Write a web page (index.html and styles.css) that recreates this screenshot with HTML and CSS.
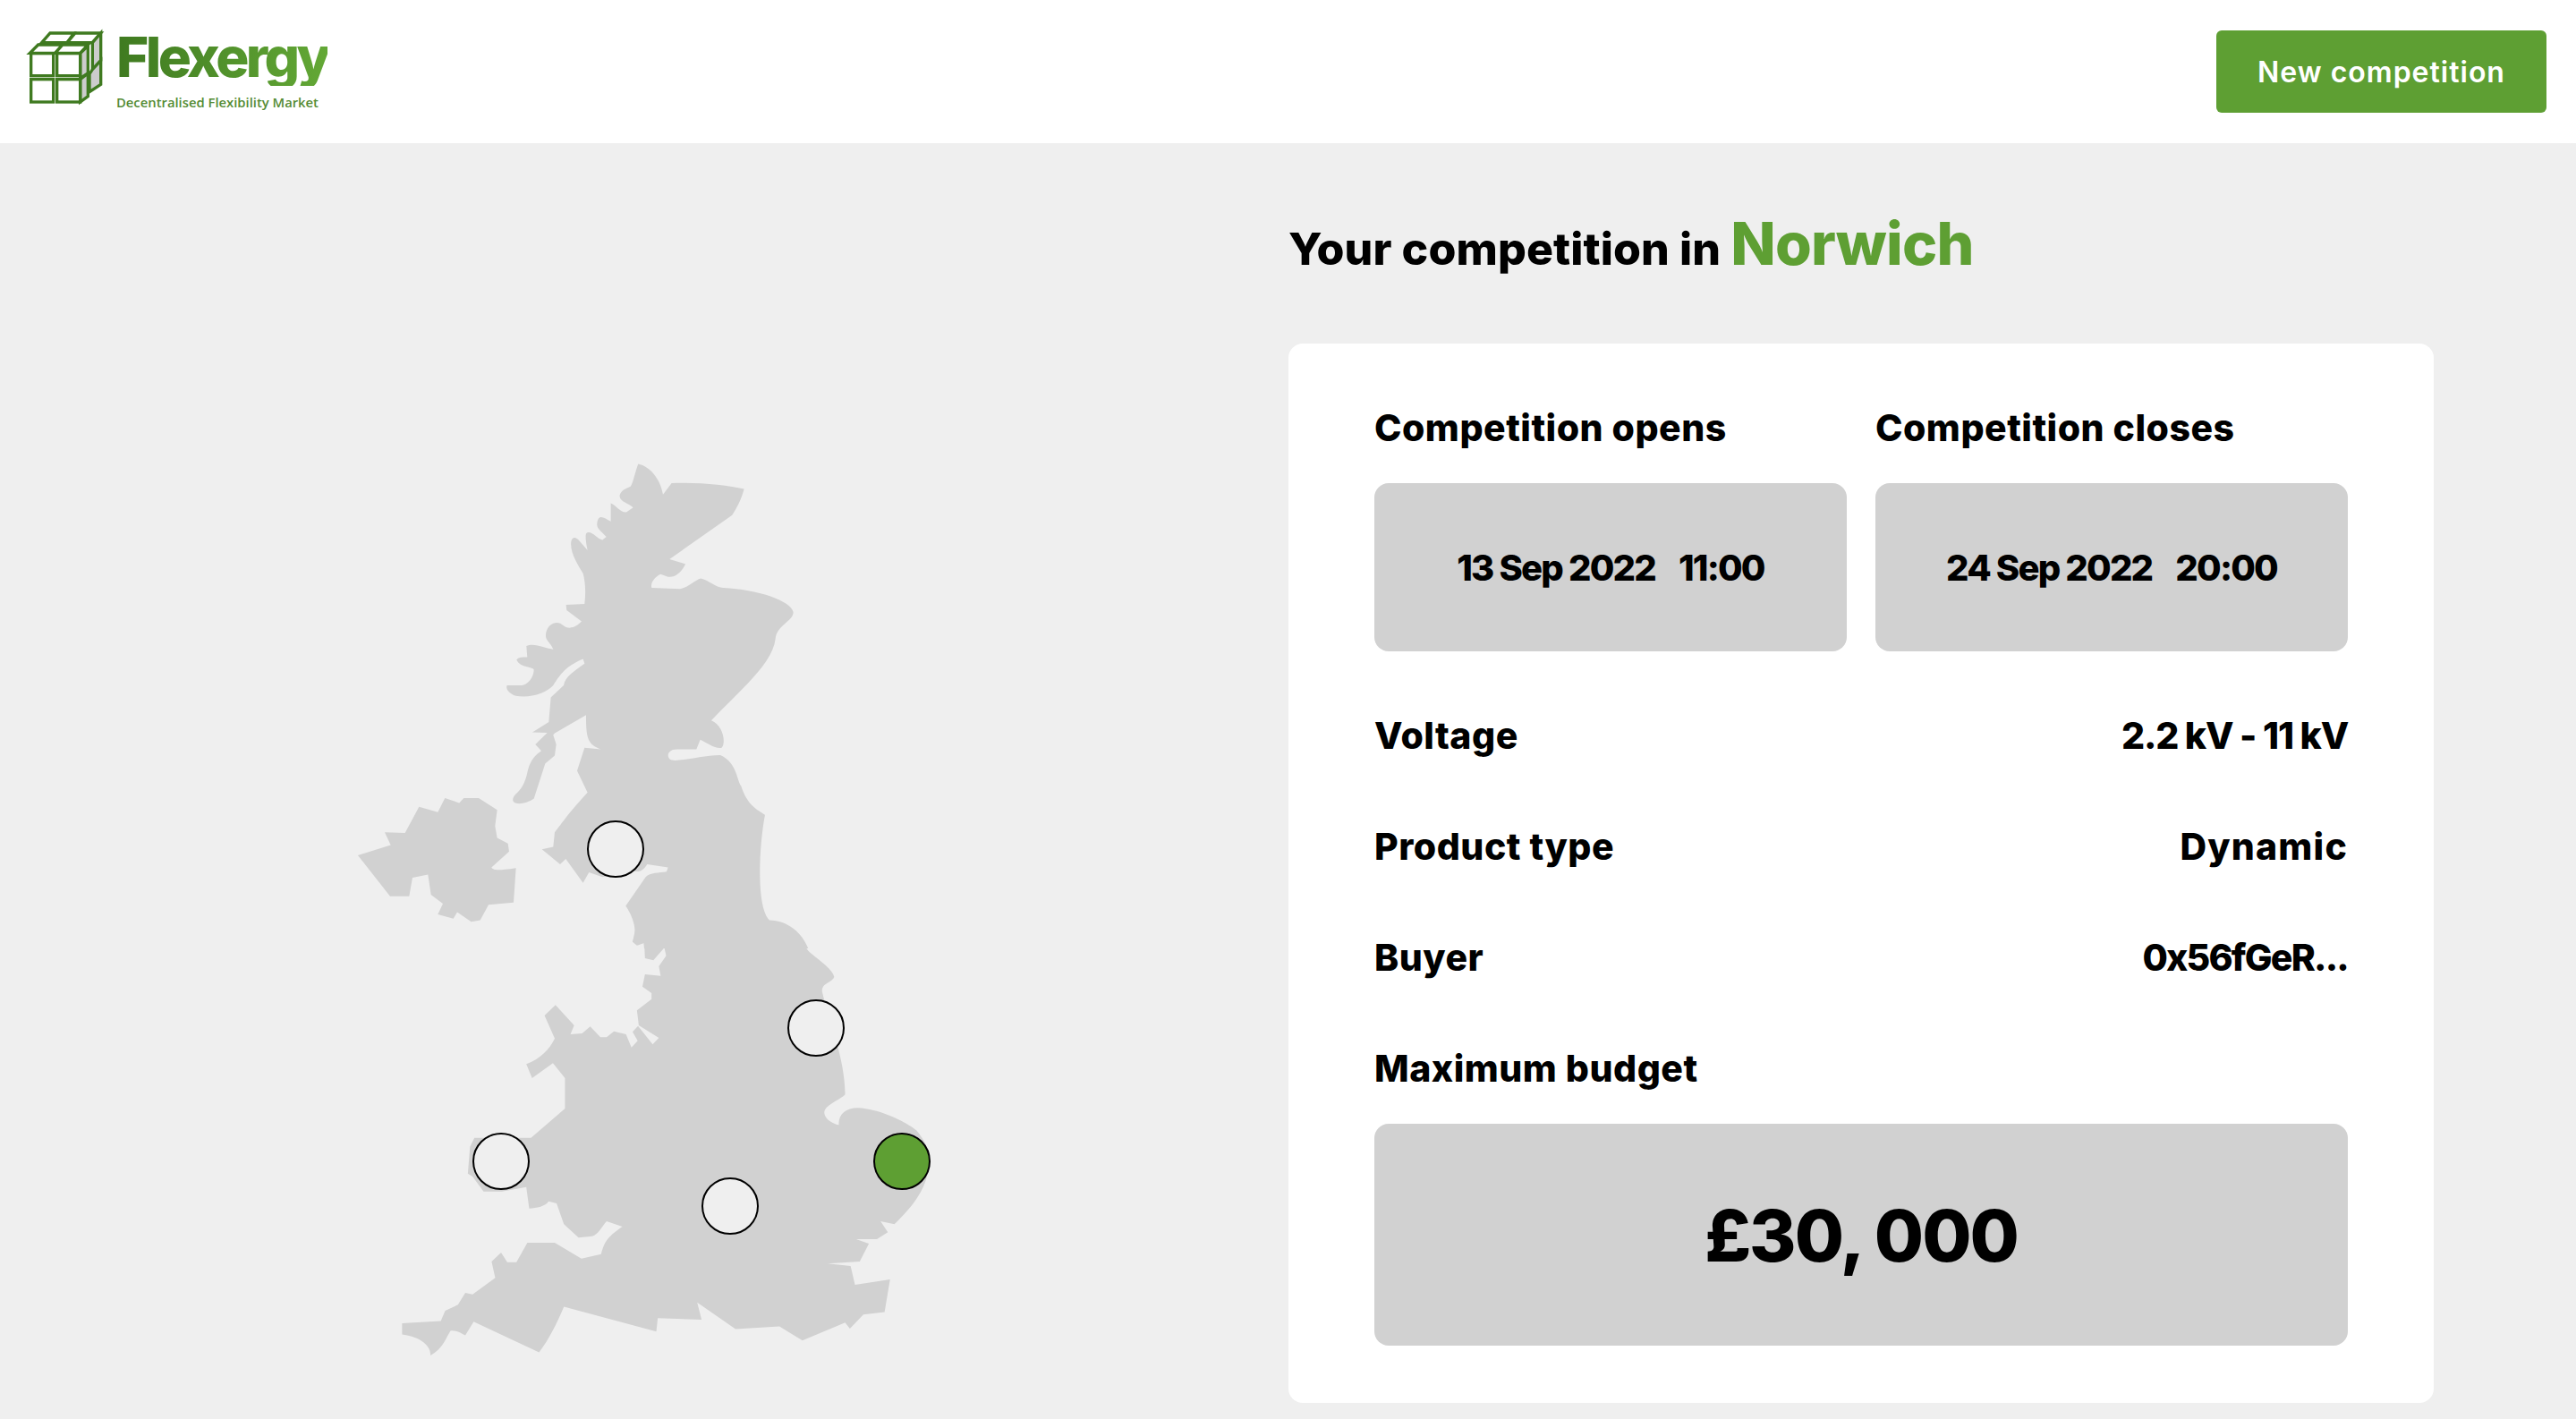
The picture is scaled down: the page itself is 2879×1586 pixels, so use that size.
FILE: index.html
```html
<!DOCTYPE html>
<html>
<head>
    <meta http-equiv="Content-Type" content="text/html; charset=utf-8" />
    <title>Flexergy - Your competition</title>
    <link rel="stylesheet" href="styles.css">
</head>
<body>

<div class="header">
    <a href="#" class="logo">
        <svg class="logo-icon" viewBox="21 6 270 270">
            <g stroke="#3f7a20" stroke-width="10" stroke-linejoin="miter">
                <path fill="#fff" d="M80 65L108 33H188L165 65Z"/>
                <path fill="#fff" d="M165 65L192 33H278L250 65Z"/>
                <path fill="#ccc" d="M250 65L278 33V125L250 155Z"/>
                <path fill="#ccc" d="M250 155L278 125V205L240 230V170Z"/>
                <path fill="#fff" d="M40 100L68 72H150L125 100Z"/>
                <path fill="#fff" d="M125 100L150 72H235L209 100Z"/>
                <path fill="#ccc" d="M209 101L235 76V168L209 184Z"/>
                <path fill="#ccc" d="M209 188L235 168V245L209 264Z"/>
                <rect fill="#fff" x="44" y="101" width="75" height="75"/>
                <rect fill="#fff" x="131" y="101" width="78" height="75"/>
                <rect fill="#fff" x="44" y="188" width="75" height="76"/>
                <rect fill="#fff" x="131" y="188" width="78" height="76"/>
            </g>
        </svg>
        <div class="logo-text">
            <div class="logo-name">Flexergy</div>
            <div class="logo-tagline">Decentralised Flexibility Market</div>
        </div>
    </a>
    <a href="#" class="btn-new">New competition</a>
</div>

<div class="main">
    <div class="map-col">
        <svg class="uk-map" viewBox="380 500 680 1060" width="680" height="1060">
            <g fill="#d1d1d1">
                <!-- scotland + north of england -->
                <path transform="translate(380 500) scale(.3333 .3571)" d="M1000 52C1040 60 1075 100 1083 148L1112 112C1200 108 1300 118 1355 130C1345 165 1330 190 1315 212L1105 350L1158 365C1150 385 1125 410 1100 405L1075 397C1055 405 1040 425 1045 440L1140 443C1165 440 1190 415 1210 410C1235 415 1260 438 1285 440C1400 445 1510 480 1520 515C1520 545 1465 555 1460 600C1450 680 1330 770 1245 855C1285 870 1295 925 1280 940C1260 945 1230 925 1208 915L1195 945H1130C1100 945 1095 965 1105 975C1120 990 1200 965 1275 963C1330 985 1330 1040 1345 1060C1365 1120 1400 1135 1425 1150C1405 1250 1395 1440 1440 1480C1500 1480 1550 1520 1570 1568H1020L1018 1548L1000 1558L982 1545C995 1520 990 1480 958 1435L1025 1345C1040 1330 1070 1332 1095 1328L1100 1315L1030 1305C1015 1330 995 1330 985 1325L880 1345L835 1330L815 1363L757 1288L738 1305L677 1258L715 1250L720 1205C745 1175 770 1140 830 1080L795 1012L820 940L875 945C830 930 825 910 825 838L720 895L715 900L725 930L720 965L688 990L650 1100C630 1112 600 1120 585 1112C570 1100 590 1085 600 1075C620 1055 625 1030 630 1010C640 975 660 960 675 950L655 930L695 893L645 892L700 860L707 783L750 745C755 725 765 712 820 677L815 662C780 675 745 695 715 745C690 770 640 785 590 778C565 770 555 755 560 745H610C630 742 650 720 650 695C640 685 605 690 592 665C600 655 615 658 628 657L625 622C650 610 690 630 715 632C705 610 690 605 690 590C690 555 725 540 745 555C770 575 795 560 810 545L760 510L758 493L820 490C825 450 822 420 815 395C800 370 770 330 775 295C780 275 795 285 800 290L830 322C825 300 822 280 825 270C840 255 860 285 880 290L893 280C880 265 860 255 862 240C865 205 885 220 908 232V175C925 180 940 205 960 203L983 188C970 175 935 170 938 150C945 130 965 128 975 122C985 105 990 75 1000 52Z"/>
                <!-- northern ireland -->
                <path transform="translate(380 500) scale(.3333 .3571)" d="M60 1277L170 1245L150 1205L218 1207L265 1125L328 1142L352 1098L400 1113L415 1098H465L527 1135L520 1185L527 1222L563 1240L567 1265L508 1315C515 1325 530 1325 590 1317L582 1425L498 1432L470 1480L440 1485L393 1455L380 1475L328 1462L345 1428L305 1400L295 1337L243 1347L232 1405H168Z"/>
                <!-- wales + england -->
                <path transform="translate(420 1040) scale(.4082 .3333)" d="M710 0H1150C1170 30 1175 60 1190 75C1220 105 1250 130 1255 155C1250 175 1220 175 1222 205C1240 300 1285 430 1285 550C1270 570 1228 585 1228 612C1230 635 1255 650 1268 652C1265 620 1285 595 1320 595C1390 600 1460 650 1480 670C1500 700 1515 730 1515 770C1515 860 1470 925 1420 985L1382 975L1402 1012L1372 1035H1315L1350 1050L1325 1110L1237 1117L1300 1125L1312 1188L1408 1170L1393 1280L1335 1288L1298 1335L1285 1315L1168 1375L1105 1328L985 1337L880 1247L892 1305L772 1300L768 1345L515 1262C495 1320 475 1370 447 1415L268 1312L245 1358C235 1350 220 1340 205 1342C190 1370 185 1400 150 1425C150 1385 110 1360 72 1355V1317L178 1310L190 1275L225 1255L245 1215L265 1220L327 1165L317 1110L343 1080L360 1112H385L415 1047H490L563 1100L617 1085C625 1050 630 1030 675 993L632 975C620 990 610 1020 592 1025L555 1030L515 985L495 915L473 908C465 925 440 930 420 932L412 860L345 875H295L265 825L252 815L258 725L270 695H425L518 597V495L485 445L428 495L412 448C450 430 475 400 490 362L462 285L492 250L543 318L533 348L565 345L587 322L615 358H632L652 338L685 348L700 392L717 370L703 340L718 320L758 382L775 360L720 318L715 268L755 230V210L730 188L737 147L780 152L775 120L795 85L790 58L760 100L737 93L735 42L715 50L703 38Z"/>
            </g>
            <g class="pins" stroke="#000" stroke-width="2">
                <circle cx="688" cy="949" r="31"/>
                <circle cx="912" cy="1149" r="31"/>
                <circle cx="560" cy="1298" r="31"/>
                <circle cx="816" cy="1348" r="31"/>
                <circle class="pin-active" cx="1008" cy="1298" r="31"/>
            </g>
        </svg>
    </div>

    <div class="info-col">
        <h1 class="title">Your competition in <span class="title-city">Norwich</span></h1>

        <div class="card">
            <div class="date-grid">
                <div>
                    <div class="label">Competition opens</div>
                    <div class="date-box"><span>13 Sep 2022</span><span>11:00</span></div>
                </div>
                <div>
                    <div class="label">Competition closes</div>
                    <div class="date-box"><span>24 Sep 2022</span><span>20:00</span></div>
                </div>
            </div>

            <div class="row"><span class="label">Voltage</span><span class="label value-voltage">2.2 kV - 11 kV</span></div>
            <div class="row"><span class="label">Product type</span><span class="label value-wide">Dynamic</span></div>
            <div class="row"><span class="label">Buyer</span><span class="label value-buyer">0x56fGeR...</span></div>
            <div class="row"><span class="label">Maximum budget</span></div>

            <div class="budget-box">£30, 000</div>
        </div>
    </div>
</div>

</body>
</html>
```

FILE: styles.css
```css
body{
    margin: 0px;padding: 0px;
    background: #efefef;color: #000;
    font-family: Inter, "Liberation Sans", sans-serif;
}
a{text-decoration: none;}

/*顶部*/
.header{
    height: 160px;padding: 0px 33px 0px 27px;
    background: #fff;
    display: flex;align-items: center;justify-content: space-between;
}
.logo{display: flex;align-items: flex-start;gap: 13px;margin-bottom: 8px;}
.logo-icon{width: 90px;height: 90px;display: block;}
.logo-text{padding-top: 4px;}
.logo-name{
    font-size: 62px;line-height: 64px;font-weight: 800;letter-spacing: -3.6px;
    background: linear-gradient(90deg, #3f7a20, #63a836);
    -webkit-background-clip: text;background-clip: text;color: transparent;
}
.logo-tagline{
    margin-top: 8px;
    font-family: "Open Sans", sans-serif;
    font-size: 14.8px;line-height: 20px;font-weight: 600;color: #558c35;
}
.btn-new{
    width: 369px;height: 92px;border-radius: 6px;
    background: #5e9f33;color: #fff;
    font-size: 32px;font-weight: 600;letter-spacing: 1px;
    display: flex;align-items: center;justify-content: center;
}

/*主体*/
.main{
    display: grid;grid-template-columns: 1440px 1280px;
}
.map-col{padding: 340px 0px 0px 380px;}
.uk-map{display: block;}
.pins circle{fill: #efefef;}
.pins .pin-active{fill: #5e9f33;}

.title{
    margin: 0px;height: 224px;
    font-size: 50px;font-weight: 800;line-height: 224px;letter-spacing: .1px;
}
.title-city{font-size: 66px;color: #5e9f33;letter-spacing: -.7px;}

.card{
    padding: 64px 96px;
    background: #fff;border-radius: 16px;
}
.label{font-size: 41px;line-height: 60px;font-weight: 800;letter-spacing: .5px;}
.value-voltage{letter-spacing: -1.2px;}
.value-wide{letter-spacing: 1.2px;}
.value-buyer{letter-spacing: -1.8px;}
.date-grid{
    display: grid;grid-template-columns: 1fr 1fr;gap: 32px;
}
.date-box{
    height: 188px;margin-top: 32px;border-radius: 16px;
    background: #d1d1d1;
    font-size: 40px;font-weight: 800;letter-spacing: -1.8px;
    display: flex;align-items: center;justify-content: center;gap: 26px;
}
.row{
    margin-top: 64px;
    display: flex;justify-content: space-between;
}
.budget-box{
    height: 248px;margin-top: 32px;border-radius: 16px;
    background: #d1d1d1;
    font-size: 80px;font-weight: 800;letter-spacing: -2px;
    display: flex;align-items: center;justify-content: center;
}
```
